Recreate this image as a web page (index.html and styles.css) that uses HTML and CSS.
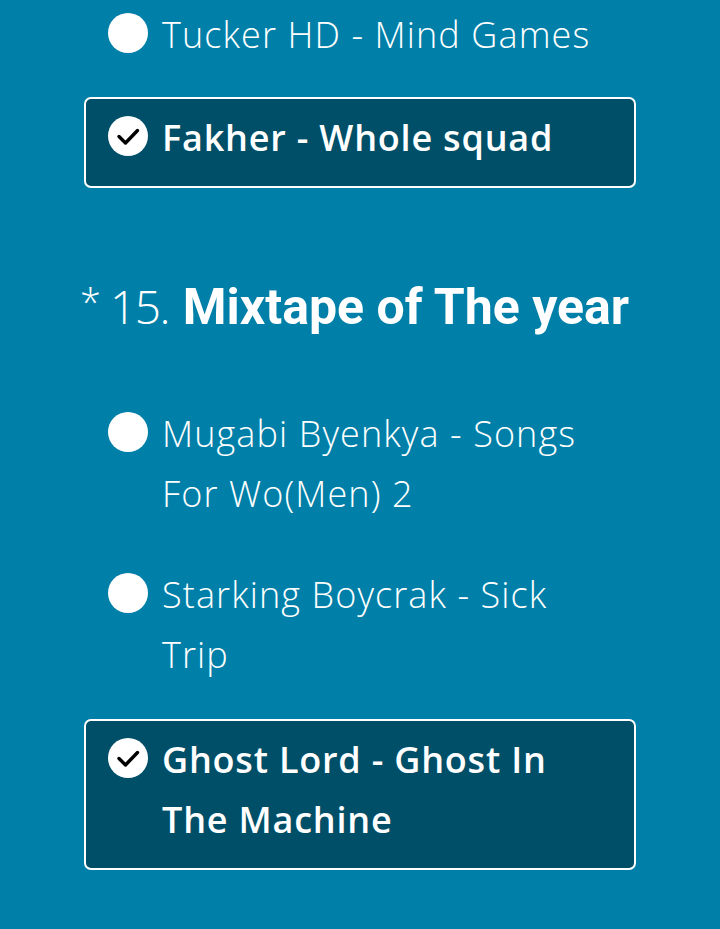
FILE: index.html
```html
<!DOCTYPE html>
<html>
<head>
<meta charset="utf-8">
<link rel="stylesheet" href="styles.css">
</head>
<body>
<div class="page">
  <div class="option">
    <span class="radio"></span>
    <span class="label">Tucker HD - Mind Games</span>
  </div>
  <div class="option selected">
    <span class="radio checked"><svg viewBox="0 0 40 40" width="40" height="40"><circle cx="20" cy="20" r="20" fill="#fff"/><path d="M11 20.5 L17.5 27 L29.5 14.5" fill="none" stroke="#000" stroke-width="3.4" stroke-linecap="round" stroke-linejoin="round"/></svg></span>
    <span class="label">Fakher - Whole squad</span>
  </div>

  <h2 class="question"><span class="req">*</span> <span class="num">15.</span> <span class="qtext">Mixtape of The year</span></h2>

  <div class="option">
    <span class="radio"></span>
    <span class="label">Mugabi Byenkya - Songs For Wo(Men) 2</span>
  </div>
  <div class="option">
    <span class="radio"></span>
    <span class="label">Starking Boycrak - Sick Trip</span>
  </div>
  <div class="option selected">
    <span class="radio checked"><svg viewBox="0 0 40 40" width="40" height="40"><circle cx="20" cy="20" r="20" fill="#fff"/><path d="M11 20.5 L17.5 27 L29.5 14.5" fill="none" stroke="#000" stroke-width="3.4" stroke-linecap="round" stroke-linejoin="round"/></svg></span>
    <span class="label">Ghost Lord - Ghost In The Machine</span>
  </div>
</div>
</body>
</html>
```
FILE: styles.css
```css
html, body {
  margin: 0;
  padding: 0;
  background: #0080a8;
}
body {
  font-family: "Open Sans", "Liberation Sans", sans-serif;
  color: #fff;
}
.page {
  width: 720px;
  height: 929px;
  overflow: hidden;
  padding: 5px 0 0 84px;
  box-sizing: border-box;
}
.option {
  display: flex;
  align-items: flex-start;
  width: 552px;
  box-sizing: border-box;
  padding: 0 28px 0 22px;
  border: 2px solid transparent;
  border-radius: 7px;
  margin-bottom: 37px;
}
.option:first-child {
  margin-top: -2px;
  margin-bottom: 35px;
}
.option + .selected {
  margin-top: -5px;
}
.radio {
  flex: 0 0 40px;
  width: 40px;
  height: 40px;
  border-radius: 50%;
  background: #fff;
  margin-top: 8px;
  margin-right: 14px;
}
.radio.checked {
  background: none;
}
.radio svg {
  display: block;
}
.label {
  font-size: 36px;
  font-weight: 300;
  line-height: 60px;
  letter-spacing: 1.1px;
}
.selected {
  background: #004f68;
  border-color: #fff;
  padding-top: 9px;
  padding-bottom: 18px;
}
.selected .label {
  font-weight: 600;
  letter-spacing: 0.8px;
}
.question {
  margin: 77px 0 59px -4px;
  font-weight: 300;
  font-size: 46px;
  line-height: 72px;
  white-space: nowrap;
}
.req {
  font-size: 38px;
  vertical-align: 8px;
  margin-right: -3px;
}
.num {
  letter-spacing: -1.5px;
}
.qtext {
  font-family: Roboto, "Liberation Sans", sans-serif;
  font-weight: 700;
  font-size: 50px;
  letter-spacing: 0;
  margin-left: 2px;
}
```
